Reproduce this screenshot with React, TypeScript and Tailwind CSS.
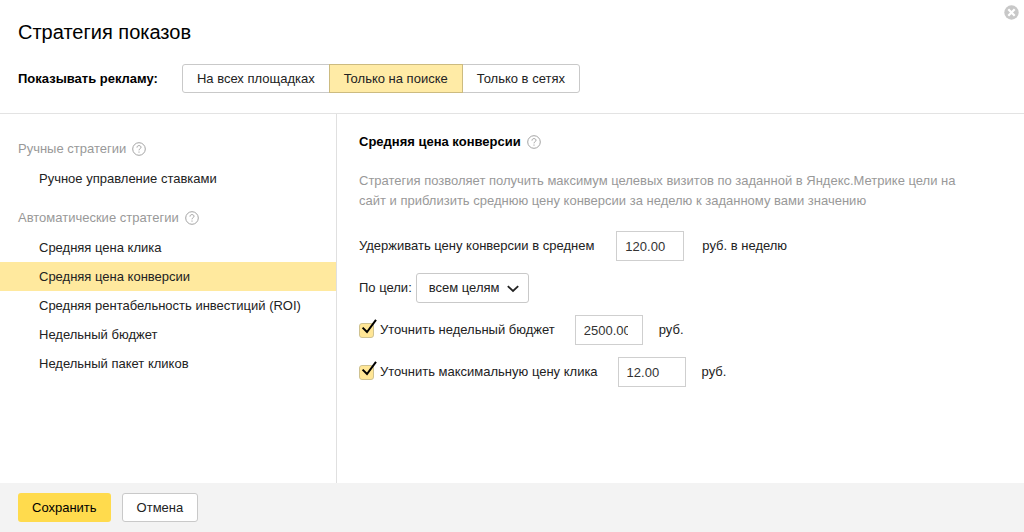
import { useState } from 'react';
import type { ReactNode } from 'react';
import clsx from 'clsx';

const places = ['На всех площадках', 'Только на поиске', 'Только в сетях'];

const groups = [
  { title: 'Ручные стратегии', items: ['Ручное управление ставками'] },
  {
    title: 'Автоматические стратегии',
    items: [
      'Средняя цена клика',
      'Средняя цена конверсии',
      'Средняя рентабельность инвестиций (ROI)',
      'Недельный бюджет',
      'Недельный пакет кликов',
    ],
  },
];

function HelpButton() {
  return (
    <button type="button" aria-label="Справка" className="text-[#a3a3a3]">
      <svg width="14" height="14" viewBox="0 0 14 14" fill="none" stroke="currentColor">
        <circle cx="7" cy="7" r="6.3" />
        <path d="M5 5.6C5 4.3 5.8 3.6 7 3.6s2 .7 2 1.7C9 6.7 7 6.7 7 8.3" />
        <path d="M7 9.5v1.2" />
      </svg>
    </button>
  );
}

function NumberField({ id, label, value }: { id: string; label?: string; value: string }) {
  return (
    <input
      id={id}
      type="text"
      aria-label={label}
      defaultValue={value}
      className="h-[30px] w-[68px] border border-[#cfcfcf] bg-white pr-3.5 pl-2 text-[#333]"
    />
  );
}

function CheckRow({ id, label, children }: { id: string; label: string; children: ReactNode }) {
  return (
    <div className="flex items-center gap-4">
      <label htmlFor={id} className="mr-1 flex items-center gap-1.5">
        <span className="relative flex">
          <input
            id={id}
            type="checkbox"
            defaultChecked
            className="peer size-[15px] appearance-none rounded-[3px] border border-[#cfc291] bg-white checked:bg-[#ffe696]"
          />
          <svg
            className="pointer-events-none absolute -top-1 left-0 hidden peer-checked:block"
            width="19"
            height="19"
            viewBox="0 0 19 19"
            fill="none"
            stroke="#000"
            strokeWidth="2"
          >
            <path d="M3.6 8.6 8 13 17 .8" />
          </svg>
        </span>
        {label}
      </label>
      {children}
      <span>руб.</span>
    </div>
  );
}

export default function App() {
  const [place, setPlace] = useState(places[1]);
  const [strategy, setStrategy] = useState('Средняя цена конверсии');

  return (
    <div className="relative flex min-h-screen flex-col bg-white font-['Liberation_Sans',Arial,sans-serif] text-[13px] leading-5 text-[#222]">
      <button type="button" aria-label="Закрыть" className="absolute top-[5px] right-[5px]">
        <svg width="15" height="15" viewBox="0 0 15 15">
          <circle cx="7.5" cy="7.5" r="7.2" fill="#c8c8c8" />
          <path d="m4.3 4.3 6.4 6.4m0-6.4-6.4 6.4" stroke="#fff" strokeWidth="2.2" />
        </svg>
      </button>

      <header className="border-b border-[#e3e3e3] px-[18px] py-5">
        <h1 className="text-xl leading-6 text-black">Стратегия показов</h1>
        <div className="mt-5 flex items-center">
          <span id="places" className="font-bold text-black">
            Показывать рекламу:
          </span>
          <div role="group" aria-labelledby="places" className="ml-6 flex">
            {places.map((name) => (
              <button
                key={name}
                type="button"
                aria-pressed={name === place}
                onClick={() => setPlace(name)}
                className={clsx(
                  '-ml-px h-[29px] border px-3.5 first:ml-0 first:rounded-l-[3px] last:rounded-r-[3px]',
                  name === place ? 'z-10 border-[#ccbb80] bg-[#ffeba6]' : 'border-[#c9c9c9] bg-white',
                )}
              >
                {name}
              </button>
            ))}
          </div>
        </div>
      </header>

      <div className="flex flex-1">
        <nav className="w-[337px] shrink-0 border-r border-[#e0e0e0] pt-5">
          {groups.map((group) => (
            <section key={group.title} className="mb-2.5">
              <h2 className="flex h-[30px] items-center gap-1.5 px-[18px] text-[#999]">
                {group.title}
                <HelpButton />
              </h2>
              <ul>
                {group.items.map((item) => (
                  <li key={item}>
                    <button
                      type="button"
                      onClick={() => setStrategy(item)}
                      className={clsx(
                        'h-[29px] w-full pl-[39px] text-left',
                        item === strategy && 'bg-[#ffe99e]',
                      )}
                    >
                      {item}
                    </button>
                  </li>
                ))}
              </ul>
            </section>
          ))}
        </nav>

        <main className="flex-1 px-[22px] pt-[18px]">
          <h2 className="flex items-center gap-1.5 font-bold text-black">
            {strategy}
            <HelpButton />
          </h2>
          <p className="mt-[19px] max-w-[610px] text-[#999]">
            Стратегия позволяет получить максимум целевых визитов по заданной в Яндекс.Метрике цели на
            сайт и приблизить среднюю цену конверсии за неделю к заданному вами значению
          </p>

          <form className="mt-5 flex flex-col gap-3">
            <div className="flex items-center gap-[18px]">
              <label htmlFor="price" className="mr-1">
                Удерживать цену конверсии в среднем
              </label>
              <NumberField id="price" value="120.00" />
              <span>руб. в неделю</span>
            </div>
            <div className="flex items-center gap-1">
              <label htmlFor="goal">По цели:</label>
              <div className="relative">
                <select
                  id="goal"
                  className="h-[30px] appearance-none rounded-[3px] border border-[#c9c9c9] bg-white pr-7 pl-3"
                >
                  <option>всем целям</option>
                </select>
                <svg
                  className="pointer-events-none absolute top-3 right-2.5"
                  width="12"
                  height="8"
                  viewBox="0 0 12 8"
                  fill="none"
                  stroke="#222"
                  strokeWidth="1.8"
                >
                  <path d="m.8 1.2 5.2 4.8 5.2-4.8" />
                </svg>
              </div>
            </div>
            <CheckRow id="use-budget" label="Уточнить недельный бюджет">
              <NumberField id="budget" label="Недельный бюджет" value="2500.00" />
            </CheckRow>
            <CheckRow id="use-max" label="Уточнить максимальную цену клика">
              <NumberField id="max-price" label="Максимальная цена клика" value="12.00" />
            </CheckRow>
          </form>
        </main>
      </div>

      <footer className="flex gap-[11px] bg-[#f3f3f3] px-[18px] py-2.5">
        <button type="button" className="h-[29px] rounded-[3px] bg-[#ffdb4d] px-3.5 text-black">
          Сохранить
        </button>
        <button type="button" className="h-[29px] rounded-[3px] border border-[#c9c9c9] bg-white px-3.5">
          Отмена
        </button>
      </footer>
    </div>
  );
}
